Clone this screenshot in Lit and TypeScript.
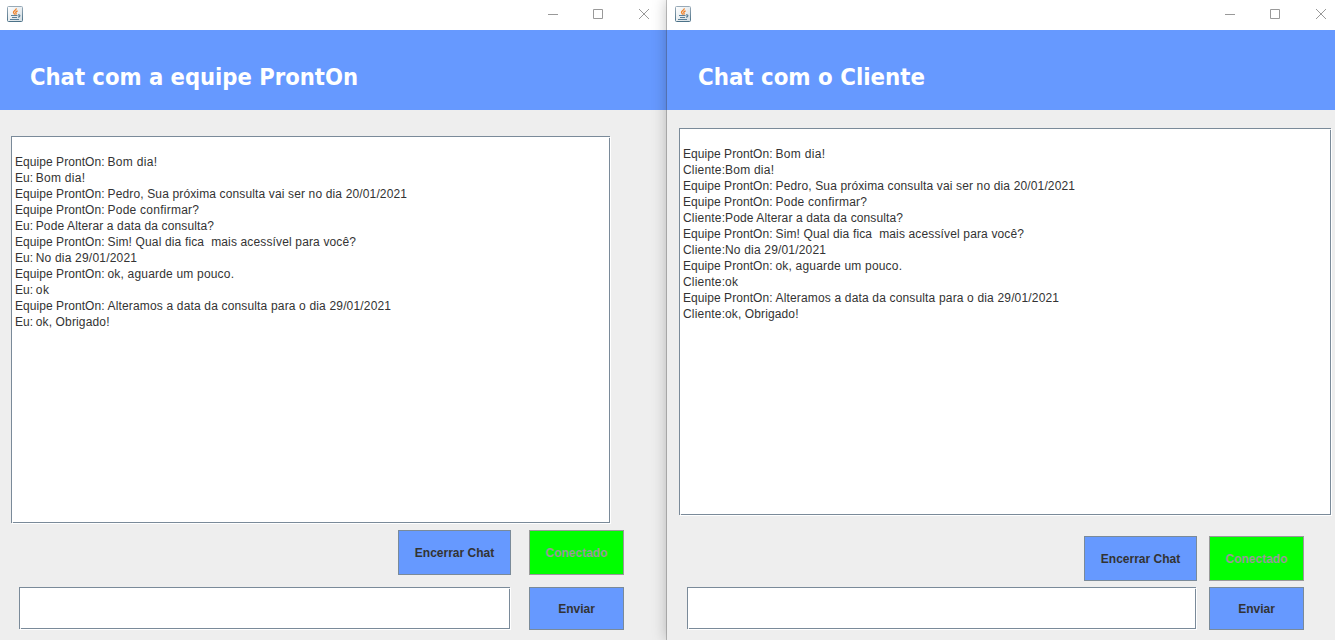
import { LitElement, html, css, svg } from "lit";
import { customElement, property } from "lit/decorators.js";

type Line = [text: string, width: number];

@customElement("java-icon")
class JavaIcon extends LitElement {
  static styles = css`
    :host { display: block; width: 16px; height: 16px; }
    svg { display: block; }
  `;
  render() {
    return html`<svg width="16" height="16" viewBox="0 0 16 16" fill="none">
      <defs>
        <linearGradient id="edge" x1="0" y1="0" x2="0" y2="1">
          <stop offset="0" stop-color="#98aab8" /><stop offset="1" stop-color="#4c7288" />
        </linearGradient>
        <linearGradient id="face" x1="0" y1="0" x2="1" y2="1">
          <stop offset="0" stop-color="#ffffff" /><stop offset="1" stop-color="#d3dde3" />
        </linearGradient>
      </defs>
      <rect x=".5" y=".5" width="15" height="15" rx="1" fill="url(#face)" stroke="url(#edge)" />
      <path d="M9.3 2.4C9.4 4.3 6.4 4.7 6.5 6.3C6.6 7.2 7.7 7.6 7.5 8.7M10.6 4.8C9 5.4 8.3 6.2 9 7.1C9.4 7.7 9 8.2 8.6 8.6" stroke="#ee7d22" stroke-width="1.3" />
      <path d="M4 9.5H10.5M5 11.5H10M3 13.5H12" stroke="#5b8098" />
      <path d="M11 8.9C13.6 8.4 13.4 11 11 11.2" stroke="#5b8098" stroke-width="1.2" />
    </svg>`;
  }
}

@customElement("fit-text")
class FitText extends LitElement {
  @property() text = "";
  @property({ type: Number }) width = 0;
  static styles = css`
    :host { display: block; height: 16px; }
    svg { display: block; overflow: visible; }
    text { font: 12px "Liberation Sans", Arial, sans-serif; fill: #333333; white-space: pre; }
  `;
  render() {
    const colon = this.text.indexOf(":") + 1;
    const sender = this.text.slice(0, colon);
    const body = this.text.slice(colon).trimStart();
    const [senderWidth, indent] = sender.startsWith("Equipe") ? [89.5, 92.5] : sender === "Eu:" ? [18, 20.7] : [42, 42];
    return html`<svg width=${this.width} height="16">
      ${svg`<text x="0" y="12" textLength=${senderWidth}>${sender}</text><text x=${indent} y="12" textLength=${this.width - indent} lengthAdjust="spacing">${body}</text>`}
    </svg>`;
  }
}

@customElement("chat-window")
class ChatWindow extends LitElement {
  @property() heading = "";
  @property({ type: Number }) headingWidth = 0;
  @property({ attribute: false }) lines: Line[] = [];

  static styles = css`
    :host { display: flex; flex-direction: column; height: 640px; background: #eeeeee; font-family: "Liberation Sans", Arial, sans-serif; }
    .bar { flex: none; height: 30px; background: #ffffff; display: flex; align-items: flex-start; justify-content: space-between; box-sizing: border-box; padding: 6px var(--bar-end) 0 var(--bar-start); }
    .controls { display: block; margin-top: 2px; }
    .head { flex: none; height: 80px; background: #6699ff; box-sizing: border-box; padding: 32px 0 0 var(--head-start); }
    .head svg { display: block; overflow: visible; }
    .head text { font: bold 23px Tahoma, "DejaVu Sans Condensed", "DejaVu Sans", sans-serif; fill: #ffffff; }
    .field { position: relative; box-sizing: border-box; flex: none; background: #ffffff; border: 1px solid #7a8a99; box-shadow: 1px 1px 0 #ffffff; }
    .field::before, .field::after { content: ""; position: absolute; width: 1px; height: 1px; background: #eeeeee; }
    .field::before { left: 0; bottom: -1px; }
    .field::after { right: -1px; top: 0; }
    .log { width: var(--log-w); height: 387px; margin: var(--log-top) 0 0 var(--log-start); padding: 17px 0 0 3px; }
    .row { display: flex; flex: none; }
    .actions { margin: var(--act-top) 0 0 var(--act-start); gap: var(--act-gap); }
    .send { margin: var(--send-top) 0 0 var(--send-start); gap: var(--send-gap); }
    .entry { width: var(--entry-w); height: 42px; }
    button { box-sizing: border-box; margin: 0; padding: 0; border: 1px solid #7a8a99; border-radius: 0; background: #6699ff; color: #333333; font: bold 12px "Liberation Sans", Arial, sans-serif; width: 95px; height: 45px; }
    .end { width: 113px; }
    .on { background: #00ff00; border-color: #999999; color: #999999; }
    .go { height: 43px; }
  `;

  render() {
    return html`
      <div class="bar">
        <java-icon></java-icon>
        <svg class="controls" width="102" height="12" fill="none" stroke="#999999">
          <path d="M0 6.5H10M45.5 1.5H54.5V10.5H45.5ZM91 1L101 11M101 1L91 11" />
        </svg>
      </div>
      <div class="head">
        <svg width="330" height="28"><text x="-1" y="23" textLength=${this.headingWidth} lengthAdjust="spacingAndGlyphs">${this.heading}</text></svg>
      </div>
      <div class="field log">
        ${this.lines.map(([t, w]) => html`<fit-text .text=${t} .width=${w}></fit-text>`)}
      </div>
      <div class="row actions">
        <button class="end">Encerrar Chat</button>
        <button class="on">Conectado</button>
      </div>
      <div class="row send">
        <div class="field entry"></div>
        <button class="go">Enviar</button>
      </div>`;
  }
}

const teamLines: Line[] = [
  ["Equipe ProntOn: Bom dia!", 142],
  ["Eu: Bom dia!", 70],
  ["Equipe ProntOn: Pedro, Sua próxima consulta vai ser no dia 20/01/2021", 392],
  ["Equipe ProntOn: Pode confirmar?", 184],
  ["Eu: Pode Alterar a data da consulta?", 199],
  ["Equipe ProntOn: Sim! Qual dia fica  mais acessível para você?", 341],
  ["Eu: No dia 29/01/2021", 122],
  ["Equipe ProntOn: ok, aguarde um pouco.", 219],
  ["Eu: ok", 34],
  ["Equipe ProntOn: Alteramos a data da consulta para o dia 29/01/2021", 376],
  ["Eu: ok, Obrigado!", 94.5],
];

const clientReplies: Record<number, Line> = {
  1: ["Cliente:Bom dia!", 91],
  4: ["Cliente:Pode Alterar a data da consulta?", 220],
  6: ["Cliente:No dia 29/01/2021", 143],
  8: ["Cliente:ok", 55],
  10: ["Cliente:ok, Obrigado!", 115.5],
};
const clientLines = teamLines.map((line, i) => clientReplies[i] ?? line);

@customElement("app-root")
class AppRoot extends LitElement {
  static styles = css`
    :host { display: flex; position: relative; width: 1335px; height: 640px; overflow: hidden; }
    chat-window { flex: none; }
    .team {
      width: 667px;
      --bar-start: 7px; --bar-end: 17px; --head-start: 31px;
      --log-w: 599px; --log-top: 26px; --log-start: 11px;
      --act-top: 7px; --act-start: 398px; --act-gap: 18px;
      --send-top: 12px; --send-start: 19px; --send-gap: 19px; --entry-w: 491px;
    }
    .client {
      position: relative;
      width: 668px;
      box-shadow: -1px 0 0 rgba(70, 70, 70, 0.3), 0 0 14px rgba(0, 0, 0, 0.27);
      --bar-start: 8px; --bar-end: 8px; --head-start: 32px;
      --log-w: 652px; --log-top: 18px; --log-start: 12px;
      --act-top: 21px; --act-start: 417px; --act-gap: 12px;
      --send-top: 6px; --send-start: 20px; --send-gap: 13px; --entry-w: 509px;
    }
  `;
  render() {
    return html`
      <chat-window class="team" heading="Chat com a equipe ProntOn" .headingWidth=${328} .lines=${teamLines}></chat-window>
      <chat-window class="client" heading="Chat com o Cliente" .headingWidth=${227} .lines=${clientLines}></chat-window>`;
  }
}
